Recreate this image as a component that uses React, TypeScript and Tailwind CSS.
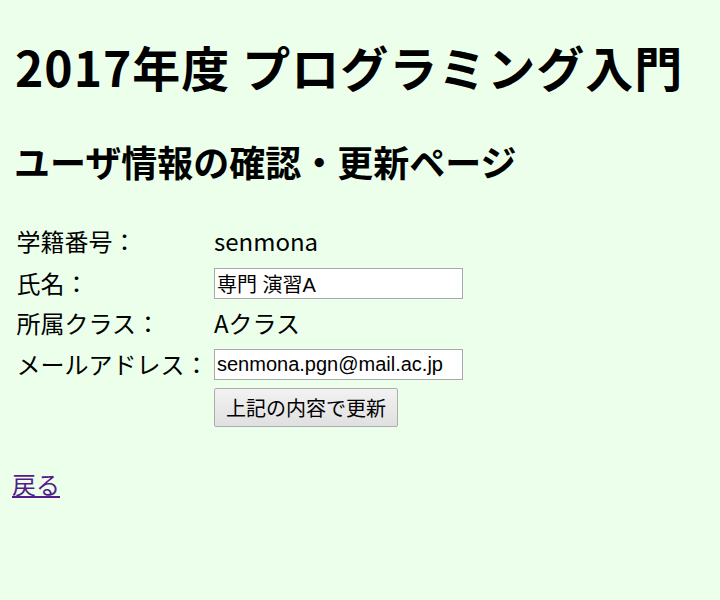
import React from 'react';

const jp = "font-['Noto_Sans_CJK_JP',sans-serif]";

const Row: React.FC<{ label: string; className: string; children?: React.ReactNode }> = ({ label, className, children }) => (
  <div className={`flex items-center ${className}`}>
    <div className="w-[202px] pl-[4.5px] shrink-0 text-[24px] leading-[34px]">{label}</div>
    <div className="flex items-center">{children}</div>
  </div>
);

export default function App() {
  return (
    <div className={`min-h-screen h-[600px] bg-[#ebffeb] text-black px-[12px] ${jp}`}>
      <h1 className="pt-[32px] pl-[3px] text-[48px] leading-[68px] font-bold tracking-[1px]">2017年度 プログラミング入門</h1>
      <h2 className="mt-[32px] pl-[2px] text-[36px] leading-[58px] font-bold">ユーザ情報の確認・更新ページ</h2>

      <div className="mt-[33px] flex flex-col">
        <Row label="学籍番号：" className="h-[36px]">
          <span className="text-[24px]">senmona</span>
        </Row>
        <Row label="氏名：" className="mt-[3px] h-[42px]">
          <input
            defaultValue="専門 演習A"
            className="w-[249px] h-[31px] bg-white border border-[#a9a9a9] px-[2px] text-[20px] font-['Liberation_Sans','Noto_Sans_CJK_JP',sans-serif] outline-none"
          />
        </Row>
        <Row label="所属クラス：" className="mt-[3px] h-[32px]">
          <span className="text-[24px]">Aクラス</span>
        </Row>
        <Row label="メールアドレス：" className="mt-[3px] h-[44px]">
          <input
            defaultValue="senmona.pgn@mail.ac.jp"
            className="w-[249px] h-[31px] bg-white border border-[#a9a9a9] px-[2px] text-[20px] font-['Liberation_Sans','Noto_Sans_CJK_JP',sans-serif] outline-none"
          />
        </Row>
        <div className="mt-[2px] h-[39px] flex items-center pl-[202px]">
          <button className="w-[184px] h-[39px] border border-[#adadad] rounded-[2px] bg-gradient-to-b from-[#f2f2f2] to-[#e0e0e0] text-[20px] leading-none text-black">
            上記の内容で更新
          </button>
        </div>
      </div>

      <p className="mt-[40px] text-[24px] leading-[34px]">
        <a href="#" className="text-[#551a8b] underline">戻る</a>
      </p>
    </div>
  );
}
